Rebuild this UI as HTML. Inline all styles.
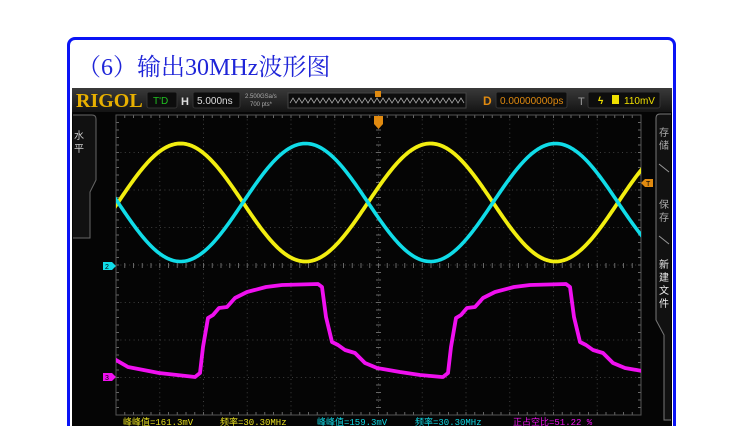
<!DOCTYPE html>
<html><head><meta charset="utf-8">
<style>
html,body{margin:0;padding:0;background:#fff;width:750px;height:426px;overflow:hidden;}
body{position:relative;font-family:"Liberation Sans",sans-serif;}
.frame{position:absolute;left:67px;top:37px;width:603px;height:400px;border:3px solid #0a14f5;border-bottom:none;border-radius:8px 8px 0 0;background:#fff;}
.title{position:absolute;left:77px;top:47px;font-family:"Liberation Serif","Noto Serif CJK SC",serif;font-size:24px;color:#1f25d8;white-space:nowrap;}
svg{position:absolute;left:0;top:0;}
</style></head><body>
<div class="frame"></div>
<div class="title">（6）输出30MHz波形图</div>
<svg width="750" height="426" viewBox="0 0 750 426" xmlns="http://www.w3.org/2000/svg">
<defs>
<linearGradient id="bar" x1="0" y1="0" x2="0" y2="1"><stop offset="0" stop-color="#3a3a3a"/><stop offset="1" stop-color="#141414"/></linearGradient>
<clipPath id="gc"><rect x="116" y="115" width="525" height="300"/></clipPath>
</defs>
<rect x="72" y="88" width="600" height="338" fill="#050505"/>
<rect x="72" y="88" width="600" height="24" fill="url(#bar)"/>
<text x="76" y="107" font-family="Liberation Serif,serif" font-weight="bold" font-size="20" fill="#e8b000">RIGOL</text>
<rect x="147" y="92" width="30" height="16" rx="2" fill="#0d0d0d" stroke="#333"/>
<text x="153" y="104" font-size="10" fill="#20c020">T'D</text>
<text x="181" y="105" font-size="11" font-weight="bold" fill="#ddd">H</text>
<rect x="193" y="92" width="47" height="16" rx="2" fill="#0d0d0d" stroke="#333"/>
<text x="197" y="104" font-size="10" fill="#ddd">5.000ns</text>
<text x="245" y="98" font-size="6" fill="#aaa">2.500GSa/s</text>
<text x="250" y="106" font-size="6" fill="#aaa">700 pts*</text>
<rect x="288" y="93" width="178" height="15" fill="#0d0d0d" stroke="#444"/>
<path id="zz" d="" fill="none" stroke="#aaa" stroke-width="0.8"/>
<rect x="375" y="91" width="6" height="6" fill="#e08a10"/>
<text x="483" y="105" font-size="12" font-weight="bold" fill="#e08a10">D</text>
<rect x="496" y="92" width="71" height="16" rx="2" fill="#0d0d0d" stroke="#333"/>
<text x="500" y="104" font-size="10" fill="#e08a10">0.00000000ps</text>
<text x="578" y="105" font-size="11" fill="#999">T</text>
<rect x="588" y="92" width="72" height="16" rx="2" fill="#0d0d0d" stroke="#333"/>
<text x="598" y="104" font-size="10" font-weight="bold" fill="#f0e000">ϟ</text>
<rect x="612" y="95" width="7" height="9" fill="#f0e000"/>
<text x="624" y="104" font-size="10" fill="#f0e000">110mV</text>
<path d="M73 115 H92 Q96 115 96 119 V180 L90 192 V238 H73" fill="#111" stroke="#666" stroke-width="1"/>
<text x="74" y="139" font-family="Noto Sans CJK SC,sans-serif" font-size="10" fill="#ccc">水</text>
<text x="74" y="152" font-family="Noto Sans CJK SC,sans-serif" font-size="10" fill="#ccc">平</text>
<path d="M671 114 H660 Q656 114 656 118 V320 L664 335 V420 H671" fill="#111" stroke="#777" stroke-width="1"/>
<g font-family="Noto Sans CJK SC,sans-serif" font-size="10" fill="#aaa">
<text x="659" y="136">存</text><text x="659" y="149">储</text>
<text x="659" y="208">保</text><text x="659" y="221">存</text>
<text x="659" y="268" fill="#eee">新</text><text x="659" y="281" fill="#eee">建</text><text x="659" y="294" fill="#eee">文</text><text x="659" y="307" fill="#eee">件</text>
</g>
<path d="M659 164 L669 172 M659 236 L669 244" stroke="#999" stroke-width="1"/>
<g id="grid" stroke="#3e3e3e" stroke-width="1" fill="none"></g>
<rect x="116" y="115" width="525" height="300" fill="none" stroke="#555"/>
<g clip-path="url(#gc)" fill="none" stroke-linejoin="round" stroke-linecap="round">
<polyline id="yel" stroke="#f2ee10" stroke-width="3.8" points=""/>
<polyline id="cyn" stroke="#10dce8" stroke-width="3.6" points=""/>
<polyline id="mag" stroke="#f010f0" stroke-width="3.8" points=""/>
</g>
<path d="M374 116 H383 V124 L378.5 129 L374 124Z" fill="#e08a10"/>
<path d="M103 262 H112 L116 266 L112 270 H103Z" fill="#10dce8"/>
<text x="105" y="269" font-size="7" fill="#000">2</text>
<path d="M103 373 H112 L116 377 L112 381 H103Z" fill="#f010f0"/>
<text x="105" y="380" font-size="7" fill="#000">3</text>
<path d="M653 179 H645 L641 183 L645 187 H653Z" fill="#e08a10"/>
<text x="646" y="186" font-size="7" fill="#000">T</text>
<g font-family="Liberation Mono,Noto Sans CJK SC,monospace" font-size="9">
<text x="123" y="425" fill="#e8e020">峰峰值=161.3mV</text>
<text x="220" y="425" fill="#e8e020">频率=30.30MHz</text>
<text x="317" y="425" fill="#10dce8">峰峰值=159.3mV</text>
<text x="415" y="425" fill="#10dce8">频率=30.30MHz</text>
<text x="513" y="425" fill="#f010f0">正占空比=51.22 %</text>
</g>
</svg>
<script>
(function(){
var ns="http://www.w3.org/2000/svg",g=document.getElementById("grid"),d="";
for(var i=1;i<12;i++){var x=116+i*43.75;d+="M"+x+" 115V415";}
for(var j=1;j<8;j++){var y=115+j*37.5;d+="M116 "+y+"H641";}
var p=document.createElementNS(ns,"path");p.setAttribute("d",d);p.setAttribute("stroke-dasharray","1 3.4");g.appendChild(p);
var t="";for(var x=116;x<=641;x+=8.75){t+="M"+x+" 263V268M"+x+" 115V118M"+x+" 412V415";}
for(var y=115;y<=415;y+=7.5){t+="M376 "+y+"H381M116 "+y+"H119M638 "+y+"H641";}
var q=document.createElementNS(ns,"path");q.setAttribute("d",t);q.setAttribute("stroke","#666");g.appendChild(q);
var y1="",c1="";
for(var x=110;x<=645;x+=1.5){var s=Math.sin(2*Math.PI*(x-118)/250);y1+=x+","+(202.5-59*s)+" ";c1+=x+","+(202.5+59*s)+" ";}
document.getElementById("yel").setAttribute("points",y1);
document.getElementById("cyn").setAttribute("points",c1);
var P=[[195,377],[200,373],[203,347],[208,318],[213,315],[219,308],[227,307],[235,298],[247,292],[266,287],[282,285],[318,284],[322,287],[326,317],[332,342],[338,345],[345,350],[355,353],[365,363],[377,368],[400,372],[420,375],[442,377]];
var m="110,357 116,360 128,367 159,373 ";
for(var k=0;k<2;k++)for(var i=0;i<P.length;i++)m+=(P[i][0]+k*248)+","+P[i][1]+" ";
document.getElementById("mag").setAttribute("points",m);
var z="M290 103";for(var x=290;x<464;x+=6){z+=" L"+(x+3)+" 98 L"+(x+6)+" 103";}
document.getElementById("zz").setAttribute("d",z);
})();
</script>
</body></html>
